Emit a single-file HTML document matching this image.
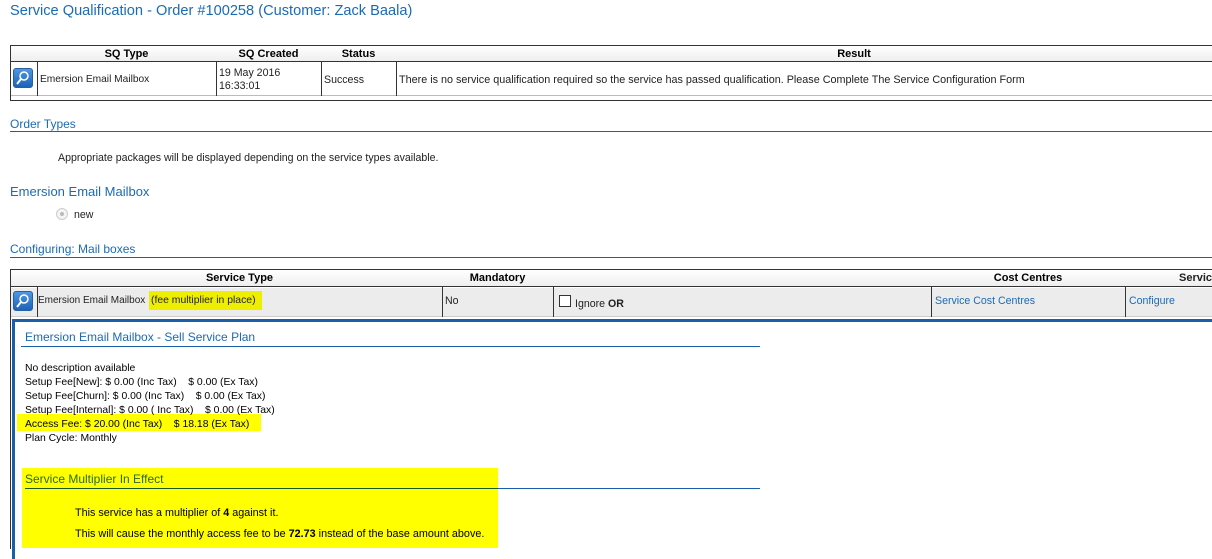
<!DOCTYPE html>
<html><head><style>
*{margin:0;padding:0;box-sizing:border-box}
body{width:1212px;height:543px;overflow:hidden;background:#fff;font-family:"Liberation Sans",Arial,sans-serif;color:#222;position:relative}
.a{position:absolute;white-space:nowrap}
.blue{color:#1a6bb5}
.hl{position:absolute;height:1px;background:#1a5fa8}
.s11{font-size:10.6px}
.th{position:absolute;font-size:11px;font-weight:bold;color:#000;text-align:center}
.vl{position:absolute;width:1px;background:#333}
.icon{position:absolute;width:20px;height:20px;border-radius:3px;background:linear-gradient(#4f97e0,#1c62b8);border:1px solid #2a5ea0}
.yel{position:absolute;background:#ffff00}
</style></head><body>
<div class="a blue" style="left:10px;top:3px;font-size:14.6px">Service Qualification - Order #100258 (Customer: Zack Baala)</div>

<!-- table 1 -->
<div style="position:absolute;left:10px;top:45px;width:1210px;height:56px;border:1px solid #333;background:#fff"></div>
<div style="position:absolute;left:11px;top:46px;width:1201px;height:16px;background:linear-gradient(#fff,#eee);border-bottom:1px solid #333"></div>
<div style="position:absolute;left:11px;top:95px;width:1201px;height:1px;background:#bbb"></div>
<div class="th" style="left:37px;width:179px;top:48px">SQ Type</div>
<div class="th" style="left:216px;width:105px;top:48px">SQ Created</div>
<div class="th" style="left:321px;width:75px;top:48px">Status</div>
<div class="th" style="left:396px;width:916px;top:48px">Result</div>
<div class="vl" style="left:37px;top:62px;height:34px"></div>
<div class="vl" style="left:216px;top:62px;height:34px"></div>
<div class="vl" style="left:321px;top:62px;height:34px"></div>
<div class="vl" style="left:396px;top:62px;height:34px"></div>
<div class="icon" style="left:13px;top:68px"><svg width="18" height="18" viewBox="0 0 18 18"><circle cx="10" cy="7" r="4" fill="none" stroke="#fff" stroke-width="1.5"/><path d="M7 10 L3 15" stroke="#fff" stroke-width="2"/></svg></div>
<div class="a" style="left:40px;top:74px;font-size:10.2px">Emersion Email Mailbox</div>
<div class="a s11" style="left:219px;top:67px;line-height:13px">19 May 2016<br>16:33:01</div>
<div class="a s11" style="left:324px;top:74px">Success</div>
<div class="a s11" style="left:399px;top:74px;font-size:10.8px">There is no service qualification required so the service has passed qualification. Please Complete The Service Configuration Form</div>

<div class="a blue" style="left:10px;top:117px;font-size:12px">Order Types</div>
<div class="hl" style="left:10px;top:131px;width:1202px"></div>
<div class="a s11" style="left:58px;top:152px">Appropriate packages will be displayed depending on the service types available.</div>
<div class="a blue" style="left:10px;top:184px;font-size:13px">Emersion Email Mailbox</div>
<div style="position:absolute;left:56px;top:208px;width:12px;height:12px;border-radius:50%;border:1px solid #ccc;background:#f4f4f4"><div style="position:absolute;left:3px;top:3px;width:4px;height:4px;border-radius:50%;background:#bbb"></div></div>
<div class="a s11" style="left:74px;top:209px">new</div>
<div class="a blue" style="left:10px;top:242px;font-size:12px">Configuring: Mail boxes</div>
<div class="hl" style="left:10px;top:257px;width:1202px"></div>

<!-- table 2 -->
<div style="position:absolute;left:10px;top:269px;width:1210px;height:280px;border:1px solid #333;border-bottom:none"></div>
<div style="position:absolute;left:11px;top:270px;width:1201px;height:17px;background:linear-gradient(#fff,#eee);border-bottom:1px solid #333"></div>
<div style="position:absolute;left:11px;top:288px;width:1201px;height:29px;background:#ececec;border-bottom:1px solid #ccc"></div>
<div class="th" style="left:37px;width:405px;top:272px">Service Type</div>
<div class="th" style="left:442px;width:111px;top:272px">Mandatory</div>
<div class="th" style="left:931px;width:194px;top:272px">Cost Centres</div>
<div class="a" style="left:1179px;top:272px;font-size:11px;font-weight:bold">Servic</div>
<div class="vl" style="left:37px;top:287px;height:30px"></div>
<div class="vl" style="left:442px;top:287px;height:30px"></div>
<div class="vl" style="left:553px;top:287px;height:30px"></div>
<div class="vl" style="left:931px;top:287px;height:30px"></div>
<div class="vl" style="left:1125px;top:287px;height:30px"></div>
<div class="icon" style="left:13px;top:291px"><svg width="18" height="18" viewBox="0 0 18 18"><circle cx="10" cy="7" r="4" fill="none" stroke="#fff" stroke-width="1.5"/><path d="M7 10 L3 15" stroke="#fff" stroke-width="2"/></svg></div>
<div class="a" style="left:38px;top:295px;font-size:10px">Emersion Email Mailbox</div>
<div class="yel" style="left:149px;top:291px;width:113px;height:19px;background:#eeee00"></div>
<div class="a" style="left:151px;top:295px;font-size:10.4px">(fee multiplier in place)</div>
<div class="a s11" style="left:445px;top:295px">No</div>
<div style="position:absolute;left:559px;top:295px;width:12px;height:12px;border:1px solid #333;background:#fff"></div>
<div class="a s11" style="left:575px;top:298px">Ignore <b>OR</b></div>
<div class="a s11 blue" style="left:935px;top:295px">Service Cost Centres</div>
<div class="a s11 blue" style="left:1129px;top:295px">Configure</div>

<!-- blue box -->
<div style="position:absolute;left:12px;top:319px;width:1210px;height:240px;border-left:3px solid #1a5fa8;border-top:3px solid #1a5fa8"></div>
<div class="a blue" style="left:25px;top:330px;font-size:12px">Emersion Email Mailbox - Sell Service Plan</div>
<div class="hl" style="left:21px;top:346px;width:739px"></div>
<div class="yel" style="left:17px;top:414px;width:244px;height:17px"></div>
<div class="a" style="left:25px;top:362px;font-size:10.4px;line-height:14px;color:#000">No description available<br>Setup Fee[New]: $ 0.00 (Inc Tax) &nbsp;&nbsp; $ 0.00 (Ex Tax)<br>Setup Fee[Churn]: $ 0.00 (Inc Tax) &nbsp;&nbsp; $ 0.00 (Ex Tax)<br>Setup Fee[Internal]: $ 0.00 ( Inc Tax) &nbsp;&nbsp; $ 0.00 (Ex Tax)<br>Access Fee: $ 20.00 (Inc Tax) &nbsp;&nbsp; $ 18.18 (Ex Tax)<br>Plan Cycle: Monthly</div>
<div class="yel" style="left:22px;top:468px;width:476px;height:80px"></div>
<div class="a" style="left:25px;top:472px;font-size:12px;color:#2a6a2a">Service Multiplier In Effect</div>
<div class="hl" style="left:25px;top:488px;width:473px;background:#1a5a2a"></div>
<div class="hl" style="left:498px;top:488px;width:262px"></div>
<div class="a" style="left:75px;top:507px;font-size:10.8px;color:#000">This service has a multiplier of <b>4</b> against it.</div>
<div class="a" style="left:75px;top:528px;font-size:10.8px;color:#000">This will cause the monthly access fee to be <b>72.73</b> instead of the base amount above.</div>
</body></html>
